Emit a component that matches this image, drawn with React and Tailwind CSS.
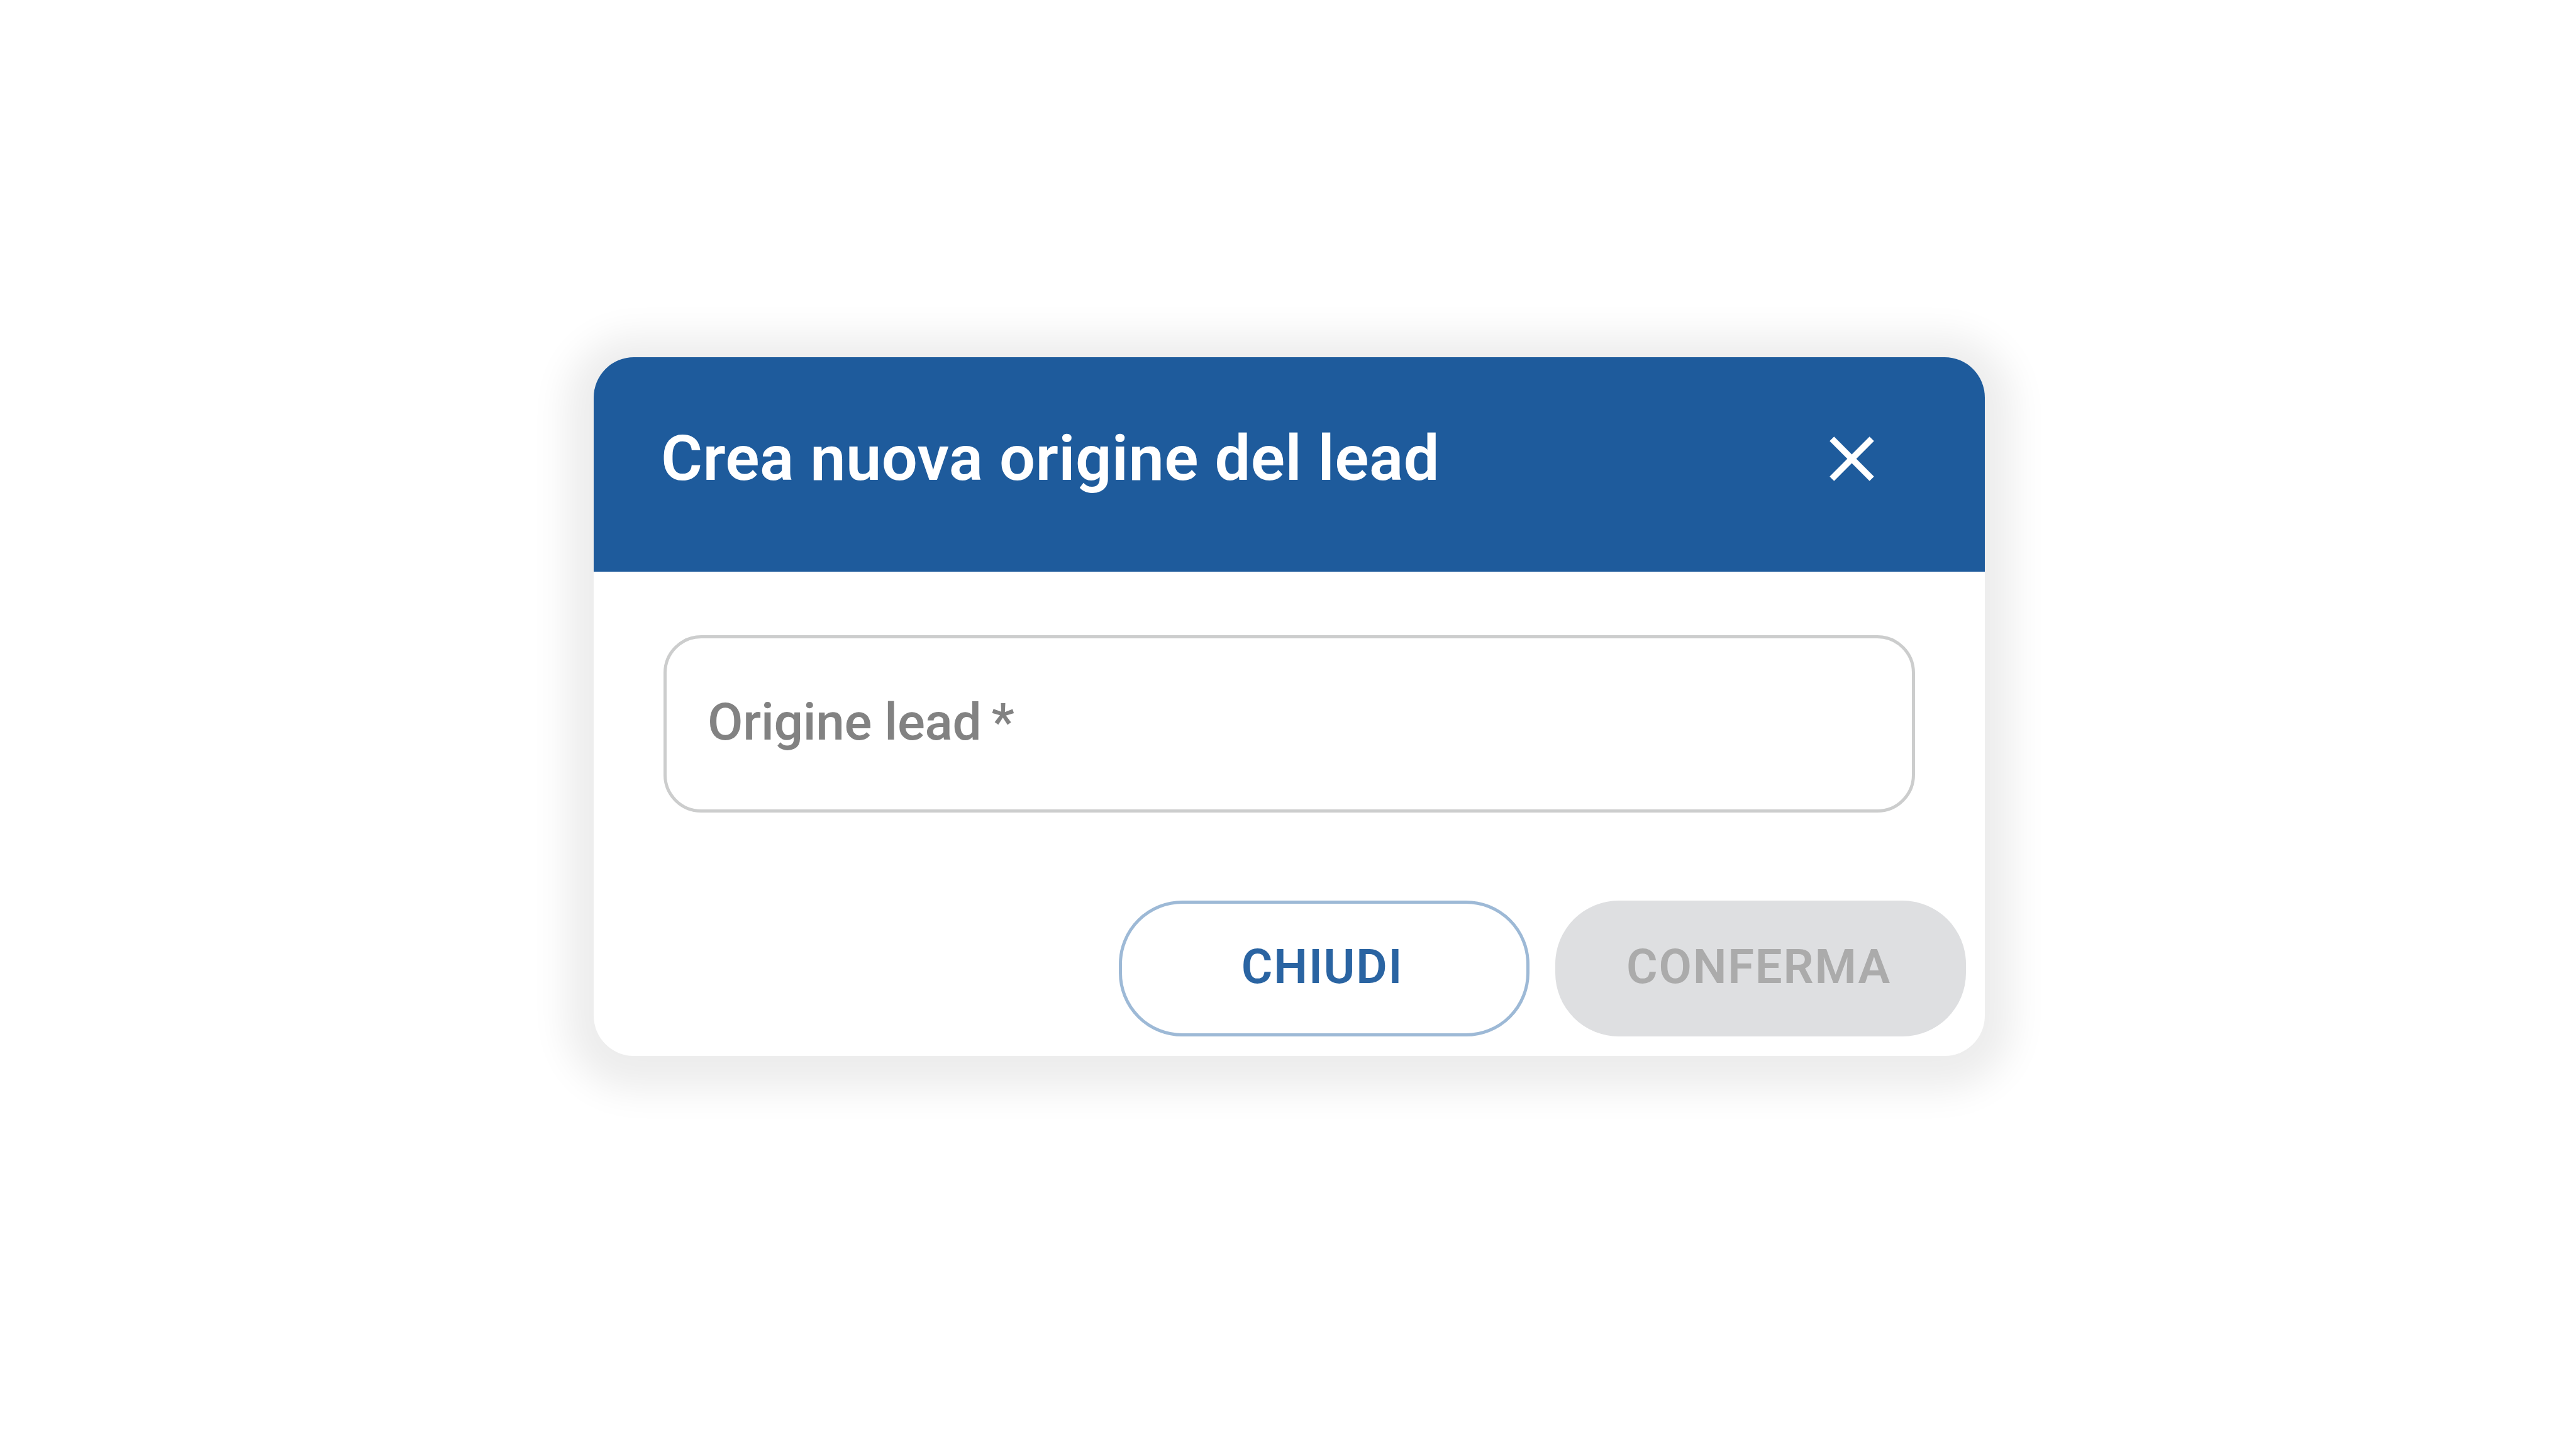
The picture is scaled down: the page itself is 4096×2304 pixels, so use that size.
import React, { useState } from 'react';
import { MdClose } from 'react-icons/md';

const ACTIONS = [
  {
    label: 'CHIUDI',
    disabled: false,
    className: 'border-[5px] border-[#9db9d6] bg-white text-[#2a64a2]',
  },
  {
    label: 'CONFERMA',
    disabled: true,
    className: 'bg-[#dedfe1] text-[#ababab]',
  },
];

function DialogHeader({ title, onClose }) {
  return (
    <header className="h-[341px] bg-[#1e5b9c] pt-[101px] pl-[107px] pr-[151px] text-white">
      <div className="flex h-[120px] items-center justify-between">
        <h2 className="whitespace-nowrap text-[101px] leading-[120px] font-semibold tracking-[0.4px]">{title}</h2>
        <button type="button" aria-label="Chiudi" onClick={onClose}>
          <MdClose className="block size-[121px]" />
        </button>
      </div>
    </header>
  );
}

export default function App() {
  const [open, setOpen] = useState(true);

  return (
    <div className="h-[2304px] w-[4096px] overflow-hidden bg-white pt-[568px] pl-[944px] font-['Roboto',sans-serif]">
      {open && (
        <div
          role="dialog"
          className="flex h-[1111px] w-[2212px] flex-col overflow-hidden rounded-[64px] bg-white shadow-[0_10px_58px_44px_rgba(0,0,0,0.073)]"
        >
          <DialogHeader title="Crea nuova origine del lead" onClose={() => setOpen(false)} />
          {/* Required field, label sits inside the outline */}
          <div className="px-[111px] pt-[101px]">
            <div className="flex h-[282px] items-center rounded-[60px] border-[5px] border-[#cccdcd] pb-[6px] pl-[65px]">
              <span className="whitespace-nowrap text-[82px] leading-[96px] font-medium tracking-[-0.3px] text-[#828282]">
                Origine lead <span className="-ml-[4px]">*</span>
              </span>
            </div>
          </div>
          <div className="mt-[140px] flex justify-end gap-[41px] pr-[30px]">
            {ACTIONS.map((action) => (
              <button
                key={action.label}
                type="button"
                disabled={action.disabled}
                className={`flex h-[216px] w-[653px] items-center justify-center rounded-[101px] pr-[6px] pb-[6px] text-[76px] leading-[88px] font-semibold tracking-[1.8px] ${action.className}`}
              >
                {action.label}
              </button>
            ))}
          </div>
        </div>
      )}
    </div>
  );
}
